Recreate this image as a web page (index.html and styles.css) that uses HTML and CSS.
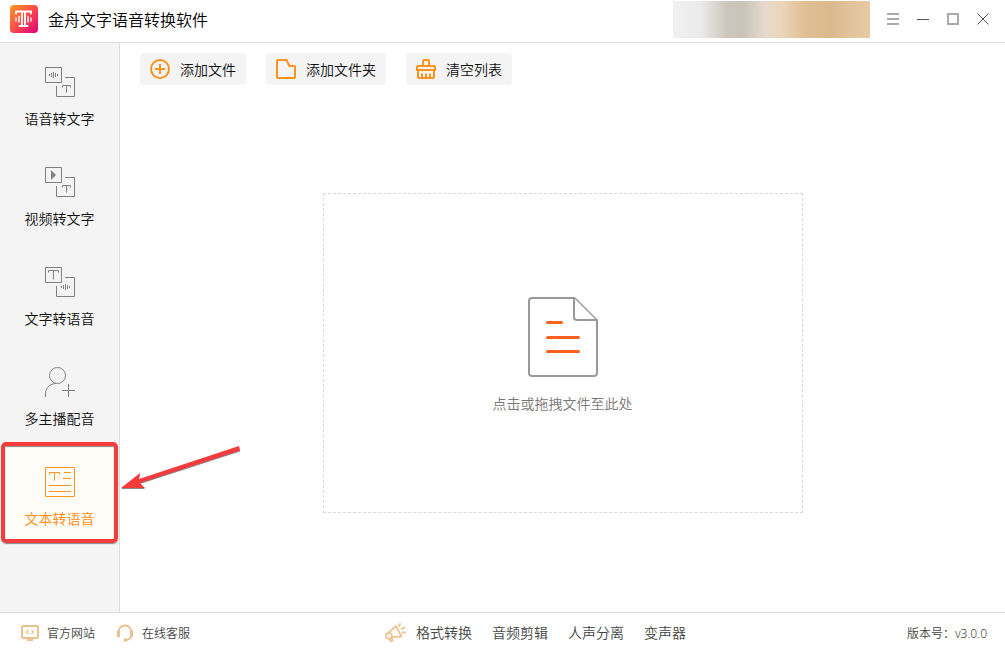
FILE: index.html
```html
<!DOCTYPE html>
<html lang="zh-CN">
<head>
  <meta charset="UTF-8">
  <meta name="viewport" content="width=device-width, initial-scale=1.0">
  <title>金舟文字语音转换软件</title>
  <link rel="stylesheet" href="styles.css">
</head>
<body>
  <div class="app">
    <header class="titlebar">
      <svg class="logo" width="28" height="28" viewBox="0 0 28 28">
        <defs>
          <linearGradient id="logoFill" x1="0" y1="0" x2="1" y2="1">
            <stop offset="0" stop-color="#ff9a1f"/>
            <stop offset="0.5" stop-color="#fb4a4a"/>
            <stop offset="1" stop-color="#e0007f"/>
          </linearGradient>
        </defs>
        <rect width="28" height="28" rx="4" fill="url(#logoFill)"/>
        <g fill="none" stroke="#fff" stroke-linecap="round" stroke-linejoin="round">
          <path d="M6 8.500V6.500h15V8.500" stroke-width="2"/>
          <path d="M12 7v13M15 7v13M9.500 21h8" stroke-width="1.800"/>
          <path d="M9 11.500v5.500M18 11.500v5.500M6 13v3M21 13v3" stroke-width="1.400"/>
        </g>
      </svg>
      <h1 class="title">金舟文字语音转换软件</h1>
      <div class="account"></div>
      <div class="controls">
        <button class="control" aria-label="菜单">
          <svg width="12" height="12" viewBox="0 0 12 12"><path d="M0 1h12M0 6h12M0 11h12" stroke="#aaa" stroke-width="2"/></svg>
        </button>
        <button class="control" aria-label="最小化">
          <svg width="12" height="12" viewBox="0 0 12 12"><path d="M0 6.500h12" stroke="#555" stroke-width="1"/></svg>
        </button>
        <button class="control" aria-label="最大化">
          <svg width="12" height="12" viewBox="0 0 12 12"><rect x="1" y="1" width="10" height="10" fill="none" stroke="#aaa" stroke-width="2"/></svg>
        </button>
        <button class="control" aria-label="关闭">
          <svg width="12" height="12" viewBox="0 0 12 12"><path d="M.5 .5l11 11M11.500 .5l-11 11" stroke="#555" stroke-width="1"/></svg>
        </button>
      </div>
    </header>

    <div class="body">
      <nav class="sidebar">
        <a class="nav-item" href="#">
          <svg width="30" height="30" viewBox="0 0 30 30">
            <path d="M.5 .5h16v15h-16zM20 10.500h9.500v19h-18V19"/>
            <path d="M4.500 7v2M6.500 6v4M8.500 5v6M10.500 6v4M12.500 7v2"/>
            <path d="M17.500 20.500v-2h8v2M21.500 18.500v7"/>
          </svg>
          <span>语音转文字</span>
        </a>
        <a class="nav-item" href="#">
          <svg width="30" height="30" viewBox="0 0 30 30">
            <path d="M.5 .5h16v15h-16zM20 10.500h9.500v19h-18V19"/>
            <path class="solid" d="M6 3l5 5-5 5z"/>
            <path d="M17.500 20.500v-2h8v2M21.500 18.500v7"/>
          </svg>
          <span>视频转文字</span>
        </a>
        <a class="nav-item" href="#">
          <svg width="30" height="30" viewBox="0 0 30 30">
            <path d="M.5 .5h16v15h-16zM20 10.500h9.500v19h-18V19"/>
            <path d="M3.500 5.500v-2h10v2M8.500 3.500v9"/>
            <path d="M16.500 19v2M18.500 18v4M20.500 17v6M22.500 18v4M24.500 19v2"/>
          </svg>
          <span>文字转语音</span>
        </a>
        <a class="nav-item" href="#">
          <svg width="30" height="30" viewBox="0 0 30 30">
            <circle cx="12.500" cy="8.500" r="8"/>
            <path d="M.5 30v-3C.5 21 5 16.500 11 16.500M23.500 17v13M17 23.500h13"/>
          </svg>
          <span>多主播配音</span>
        </a>
        <a class="nav-item active" href="#">
          <svg width="30" height="30" viewBox="0 0 30 30">
            <path d="M.5 .5h29v29H.5z"/>
            <path d="M4.500 7.500v-2h10v2M9.500 5.500v8M19 5.500h7M18 11.500h8M4 18.500h22M4 24.500h22"/>
          </svg>
          <span>文本转语音</span>
          <svg class="arrow" width="122" height="48" viewBox="0 0 122 48">
            <g fill="#8a8a8a" transform="translate(0 1)">
              <path d="M2 42L21 27 20 33 120 0 121 4.500 21 37 26 42z"/>
            </g>
            <path fill="#f43c3c" d="M2 42L21 27 20 33 120 0 121 4.500 21 37 26 42z"/>
          </svg>
        </a>
      </nav>

      <main class="main">
        <div class="toolbar">
          <button class="tool">
            <svg width="20" height="20" viewBox="0 0 20 20"><circle cx="10" cy="10" r="9"/><path d="M10 5v10M5 10h10"/></svg>
            <span>添加文件</span>
          </button>
          <button class="tool">
            <svg width="20" height="20" viewBox="0 0 20 20"><path d="M2 1h8.500l3 6H18q1 0 1 1v10q0 1-1 1H2q-1 0-1-1V2q0-1 1-1z"/></svg>
            <span>添加文件夹</span>
          </button>
          <button class="tool">
            <svg width="20" height="20" viewBox="0 0 20 20"><path d="M7 7V2q0-1 1-1h4q1 0 1 1v5M2 7h16q1 0 1 1v3H1V8q0-1 1-1zM2 11v7q0 1 1 1h14q1 0 1-1v-7M6 14.500V19M10 14.500V19M14 14.500V19"/></svg>
            <span>清空列表</span>
          </button>
        </div>
        <div class="workspace">
          <button class="dropzone">
            <svg width="70" height="80" viewBox="0 0 70 80" fill="none" stroke="#999" stroke-width="2" stroke-linejoin="round">
              <path d="M47 1H4Q1 1 1 4v72q0 3 3 3h62q3 0 3-3V23H49q-3 0-3-3V1"/>
              <path d="M47 1l22 22" stroke-width="1.500"/>
              <path d="M19.500 25.500h14M19.500 40.500h31M19.500 54.500h31" stroke="#ff5f1f" stroke-width="3" stroke-linecap="round"/>
            </svg>
            <span>点击或拖拽文件至此处</span>
          </button>
        </div>
      </main>
    </div>

    <footer class="footer">
      <div class="support">
        <a class="support-link" href="#">
          <svg width="18" height="16" viewBox="0 0 18 16" fill="none" stroke="#ecc08a">
            <rect x="1" y="1" width="16" height="12" rx="1" stroke-width="2"/>
            <path d="M7.500 5L5.500 7l2 2M10.500 5l2 2-2 2" stroke-width="1.200"/>
            <path d="M6 14.500h6" stroke-width="3"/>
          </svg>
          <span>官方网站</span>
        </a>
        <a class="support-link" href="#">
          <svg width="18" height="18" viewBox="0 0 18 18" fill="none" stroke="#ecc08a">
            <path d="M2.500 9V8a6.500 6.500 0 0 1 13 0v1" stroke-width="1.800"/>
            <path d="M2.500 7.500v4.500M15.500 7.500v4.500" stroke-width="3" stroke-linecap="round"/>
            <path d="M15.500 11q-1 5-6 5" stroke-width="1.600"/>
            <circle cx="9.500" cy="16" r="1.800" fill="#ecc08a" stroke="none"/>
          </svg>
          <span>在线客服</span>
        </a>
      </div>
      <div class="links">
        <svg width="21" height="20" viewBox="0 0 21 20" fill="none" stroke="#f0c594" stroke-width="1.800" stroke-linejoin="round" stroke-linecap="round">
          <path d="M2.500 10.500L11 3l5.500 10.500-8.500 .5"/>
          <circle cx="4" cy="13" r="3"/>
          <path d="M4.500 16l1.500 2.500 1.500-.5-.5-3M14 3l1-2M16.500 6l3-1.500M17.500 9.500h2.500"/>
        </svg>
        <a href="#">格式转换</a>
        <a href="#">音频剪辑</a>
        <a href="#">人声分离</a>
        <a href="#">变声器</a>
      </div>
      <div class="version">版本号：v3.0.0</div>
    </footer>
  </div>
</body>
</html>
```
FILE: styles.css
```css
* {
  box-sizing: border-box;
}
body {
  margin: 0;
  font-family: "Noto Sans", "Noto Sans CJK SC", sans-serif;
  font-size: 14px;
  font-weight: 350;
  line-height: 20px;
  color: #111;
  background-color: #fff;
}
a {
  color: inherit;
  text-decoration: none;
}
button {
  border: none;
  font: inherit;
  color: inherit;
  background: none;
  cursor: pointer;
}
svg {
  display: block;
  flex: none;
}
.app {
  display: flex;
  flex-direction: column;
  min-height: 100vh;
}
.titlebar {
  display: flex;
  align-items: center;
  height: 43px;
  padding: 0 7px 4px 10px;
  border-bottom: 1px solid #dcdcdc;
}
.title {
  margin: 0 auto 0 10px;
  padding-top: 2px;
  font-size: 16px;
  font-weight: 350;
  line-height: 24px;
  color: #000;
}
.account {
  width: 197px;
  height: 37px;
  margin-right: 8px;
  background: linear-gradient(90deg, #f1f1f1 0%, #ebebeb 14%, #cdc8bf 27%, #c8c3b8 35%, #e8dace 47%, #ecd5ba 55%, #e0c098 66%, #dbb98d 80%, #e4c7a0 95%, #e6caa4 100%);
}
.controls {
  display: flex;
}
.control {
  display: flex;
  align-items: center;
  justify-content: center;
  width: 30px;
  height: 30px;
  padding: 0;
}
.body {
  display: flex;
  flex: 1;
}
.sidebar {
  width: 120px;
  border-right: 1px solid #dcdcdc;
  background-color: #f4f4f4;
}
.nav-item {
  position: relative;
  display: flex;
  flex-direction: column;
  align-items: center;
  gap: 12px;
  height: 100px;
  padding-top: 24px;
}
.nav-item svg {
  fill: none;
  stroke: #808080;
}
.nav-item .solid {
  fill: #808080;
  stroke: none;
}
.active {
  color: #ff8c0f;
  background-color: #fffcf7;
}
.active svg {
  stroke: #ff931e;
}
/* red frame round the current item */
.active::after {
  content: "";
  position: absolute;
  inset: -1px 1px 0;
  border: 4px solid #f43c3c;
  border-radius: 5px;
  box-shadow: 0 1px 1px #888, inset 0 1px 1px #888;
}
.nav-item .arrow {
  position: absolute;
  left: 119px;
  top: 3px;
  z-index: 1;
  stroke: none;
}
.main {
  display: flex;
  flex-direction: column;
  flex: 1;
}
.toolbar {
  display: flex;
  gap: 20px;
  padding: 10px 20px 8px;
}
.tool {
  display: flex;
  align-items: center;
  gap: 10px;
  height: 32px;
  padding: 0 10px;
  border-radius: 4px;
  background-color: #f4f4f4;
}
.tool span {
  padding-top: 2px;
}
.tool svg {
  fill: none;
  stroke: #ff931e;
  stroke-width: 2;
}
.workspace {
  display: flex;
  flex: 1;
  align-items: center;
  justify-content: center;
}
.dropzone {
  display: flex;
  flex-direction: column;
  align-items: center;
  justify-content: center;
  gap: 17px;
  width: 480px;
  height: 320px;
  padding: 5px 0 0;
  border: 1px dashed #d8d8d8;
  color: #777;
}
.footer {
  display: grid;
  grid-template-columns: 364px 1fr auto;
  align-items: center;
  height: 41px;
  padding: 0 18px 0 21px;
  border-top: 1px solid #dcdcdc;
  color: #444;
}
.support {
  display: flex;
  gap: 21px;
  font-size: 12px;
}
.support span,
.version {
  padding-top: 2px;
}
.support-link {
  display: flex;
  align-items: center;
  gap: 8px;
}
.links {
  display: flex;
  align-items: center;
  gap: 20px;
}
.links svg {
  margin-right: -10px;
}
.version {
  font-size: 12px;
}
```
